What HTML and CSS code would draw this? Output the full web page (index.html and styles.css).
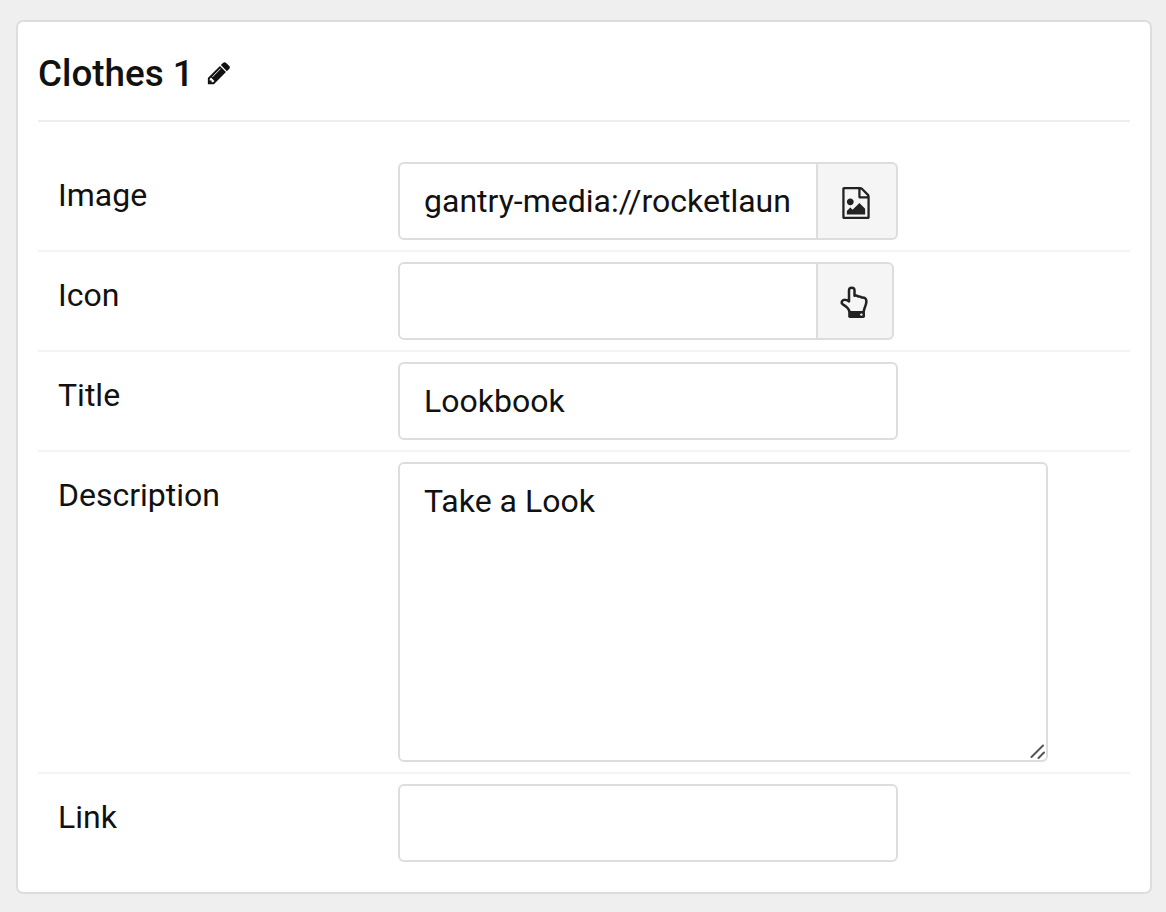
FILE: index.html
```html
<!DOCTYPE html>
<html lang="en">
<head>
<meta charset="utf-8">
<title>Clothes 1</title>
<link rel="stylesheet" href="styles.css">
</head>
<body>
<section class="card">
  <header class="card-header">
    <h1 class="card-title">Clothes 1</h1>
    <svg class="pencil" viewBox="0 0 1792 1792"><path d="M491 1536l91-91-235-235-91 91v107h128v128h107zm523-928q0-22-22-22-10 0-17 7l-542 542q-7 7-7 17 0 22 22 22 10 0 17-7l542-542q7-7 7-17zm-54-192l416 416-832 832h-416v-416zm683 96q0 53-37 90l-166 166-416-416 166-165q36-38 90-38 53 0 91 38l235 234q37 39 37 91z"/></svg>
  </header>
  <div class="row">
    <label class="label" for="image">Image</label>
    <div class="group">
      <input class="field field-joined" id="image" type="text" value="gantry-media://rocketlaun">
      <button class="addon addon-image" type="button" aria-label="Pick image">
        <svg class="icon" viewBox="0 0 1792 1792"><path d="M1596 380q28 28 48 76t20 88v1152q0 40-28 68t-68 28h-1344q-40 0-68-28t-28-68v-1600q0-40 28-68t68-28h896q40 0 88 20t76 48zm-444-244v376h376q-10-29-22-41l-313-313q-12-12-41-22zm384 1528v-1024h-416q-40 0-68-28t-28-68v-416h-768v1536h1280zm-128-448v320h-1024v-192l192-192 128 128 384-384zm-832-192q-80 0-136-56t-56-136 56-136 136-56 136 56 56 136-56 136-136 56z"/></svg>
      </button>
    </div>
  </div>
  <div class="row">
    <label class="label" for="icon">Icon</label>
    <div class="group">
      <input class="field field-joined" id="icon" type="text">
      <button class="addon addon-icon" type="button" aria-label="Pick icon">
        <svg class="icon" viewBox="0 0 32 32">
          <path class="hand" d="M10.4 26C10.4 22.5 6.5 19.8 3.8 18.3C1.8 17 2.8 13.6 5.8 13.7C7.5 13.7 8.8 14.6 10 15.4V4.2C10 .8 15.5 .8 15.5 4.2V9.8C17 9.3 18.4 9.7 19.3 10.6C20.7 10.2 22 10.6 22.8 11.6C25.6 11.2 27.4 12.6 27.4 15.2C27.4 19.5 24.7 22.2 24.7 26"/>
          <rect x="9.2" y="24.9" width="16.8" height="7" rx="1.7"/>
          <circle class="button-dot" cx="22.4" cy="28.6" r="1.2"/>
        </svg>
      </button>
    </div>
  </div>
  <div class="row">
    <label class="label" for="title">Title</label>
    <input class="field" id="title" type="text" value="Lookbook">
  </div>
  <div class="row">
    <label class="label" for="description">Description</label>
    <div class="area-wrap">
      <textarea class="field area" id="description">Take a Look</textarea>
      <svg class="grip" viewBox="0 0 16 16"><path d="M2.5 14L14 2.5M9.5 15L15 9.5"/></svg>
    </div>
  </div>
  <div class="row">
    <label class="label" for="link">Link</label>
    <input class="field" id="link" type="text">
  </div>
</section>
</body>
</html>
```
FILE: styles.css
```css
* { box-sizing: border-box; }

body {
  margin: 0;
  padding: 20px 14px 18px 16px;
  background: #efefef;
  color: #111;
  font: 32px/44px Roboto, sans-serif;
}

.card {
  height: 874px;
  padding: 0 20px 20px;
  background: #fff;
  border: 2px solid #ddd;
  border-radius: 7px;
}

.card-header {
  display: flex;
  align-items: center;
  gap: 12px;
  height: 100px;
  margin-bottom: 30px;
  padding-top: 4px;
  border-bottom: 2px solid #eee;
}

.card-title {
  margin: 0;
  padding-top: 1px;
  font-size: 36.8px;
  font-weight: 500;
}

.pencil {
  width: 26px;
  height: 26px;
  fill: #111;
}

.row {
  display: flex;
  align-items: flex-start;
  padding: 10px 0 10px 20px;
  border-bottom: 2px solid #f4f4f4;
}

.row:last-child { border-bottom: 0; }

.label {
  width: 340px;
  padding-top: 11px;
}

.group { display: flex; }

.field {
  display: block;
  width: 500px;
  height: 78px;
  margin: 0;
  padding: 0 24px;
  background: #fff;
  border: 2px solid #ddd;
  border-radius: 6px;
  outline: 0;
  color: #111;
  font: inherit;
}

.field-joined {
  width: 420px;
  border-radius: 6px 0 0 6px;
}

.addon {
  display: flex;
  align-items: center;
  justify-content: center;
  height: 78px;
  margin: 0;
  padding: 2px 2px 0 0;
  background: #f5f5f5;
  border: 2px solid #ddd;
  border-left: 0;
  border-radius: 0 6px 6px 0;
}

.addon-image {
  width: 80px;
  padding-top: 3px;
}

.addon-icon {
  width: 76px;
  padding-right: 0;
}

.icon {
  width: 32px;
  height: 32px;
  fill: #222;
}

.hand {
  fill: none;
  stroke: #222;
  stroke-width: 2.5;
  stroke-linejoin: round;
}

.button-dot { fill: #f5f5f5; }

.area-wrap { position: relative; }

.area {
  width: 650px;
  height: 300px;
  padding: 15px 24px;
  resize: none;
}

.grip {
  position: absolute;
  right: 3px;
  bottom: 3px;
  width: 16px;
  height: 16px;
  fill: none;
  stroke: #555;
  stroke-width: 2;
  stroke-linecap: round;
}
```
